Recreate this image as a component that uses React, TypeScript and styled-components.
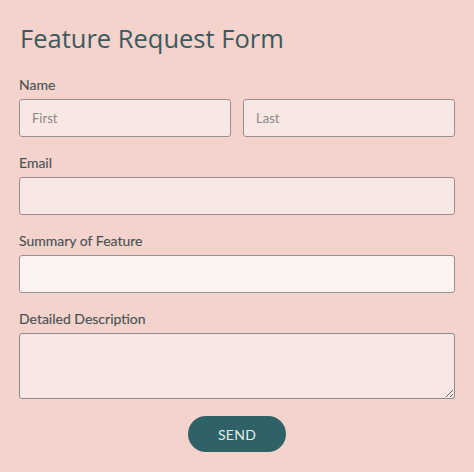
import styled, { createGlobalStyle } from "styled-components";

const GlobalStyle = createGlobalStyle`
   * {
      box-sizing: border-box;
   }
   body {
      margin: 0;
      background-color: #f3d3cb;
   }
`;

const Page = styled.form`
   display: flex;
   flex-direction: column;
   padding: 20px 19px 20px 19px;
   min-height: 472px;
   background-color: #f3d3cb;
   font-family: "Open Sans", sans-serif;
`;

const Title = styled.h1`
   margin: 0 0 19px 1px;
   font-size: 25.5px;
   line-height: 36px;
   font-weight: 400;
   color: #3c5a5e;
`;

const Fields = styled.div`
   display: flex;
   flex-direction: column;
   gap: 16px;
`;

const Field = styled.div`
   display: flex;
   flex-direction: column;
`;

const Label = styled.label`
   display: block;
   margin-bottom: 4px;
   font-family: Lato, sans-serif;
   font-size: 14px;
   line-height: 20px;
   font-weight: 400;
   color: #4a5253;
   -webkit-text-stroke: 0.15px #4a5253;
`;

const Row = styled.div`
   display: flex;
   gap: 12px;
`;

const Input = styled.input<{ $light?: boolean }>`
   flex: 1;
   min-width: 0;
   height: 38px;
   padding: 0 12px;
   border: 1px solid #9a9090;
   border-radius: 3px;
   background-color: ${(props) => (props.$light ? "#fcf3f0" : "#f8e8e4")};
   font-family: Lato, sans-serif;
   font-size: 13px;
   color: #444;
   outline: none;

   &::placeholder {
      color: #8e8686;
   }
`;

const TextArea = styled.textarea`
   height: 66px;
   padding: 8px 12px;
   border: 1px solid #8e8888;
   border-radius: 3px;
   background-color: #f8e8e4;
   font-family: Lato, sans-serif;
   font-size: 13px;
   outline: none;
   resize: vertical;
   display: block;
`;

const Footer = styled.div`
   display: flex;
   justify-content: center;
   margin-top: 17px;
`;

const SendButton = styled.button`
   width: 98px;
   height: 36px;
   border: none;
   border-radius: 18px;
   background-color: #2f6266;
   color: #e3efee;
   font-family: Lato, sans-serif;
   font-size: 14px;
   letter-spacing: 0.3px;
   cursor: pointer;
`;

export default function App() {
   return (
      <>
         <GlobalStyle />
         <Page onSubmit={(e) => e.preventDefault()}>
            <Title>Feature Request Form</Title>
            <Fields>
               <Field>
                  <Label>Name</Label>
                  <Row>
                     <Input placeholder="First" />
                     <Input placeholder="Last" />
                  </Row>
               </Field>
               <Field>
                  <Label>Email</Label>
                  <Row>
                     <Input type="email" />
                  </Row>
               </Field>
               <Field>
                  <Label>Summary of Feature</Label>
                  <Row>
                     <Input $light />
                  </Row>
               </Field>
               <Field>
                  <Label>Detailed Description</Label>
                  <TextArea />
               </Field>
            </Fields>
            <Footer>
               <SendButton type="submit">SEND</SendButton>
            </Footer>
         </Page>
      </>
   );
}
